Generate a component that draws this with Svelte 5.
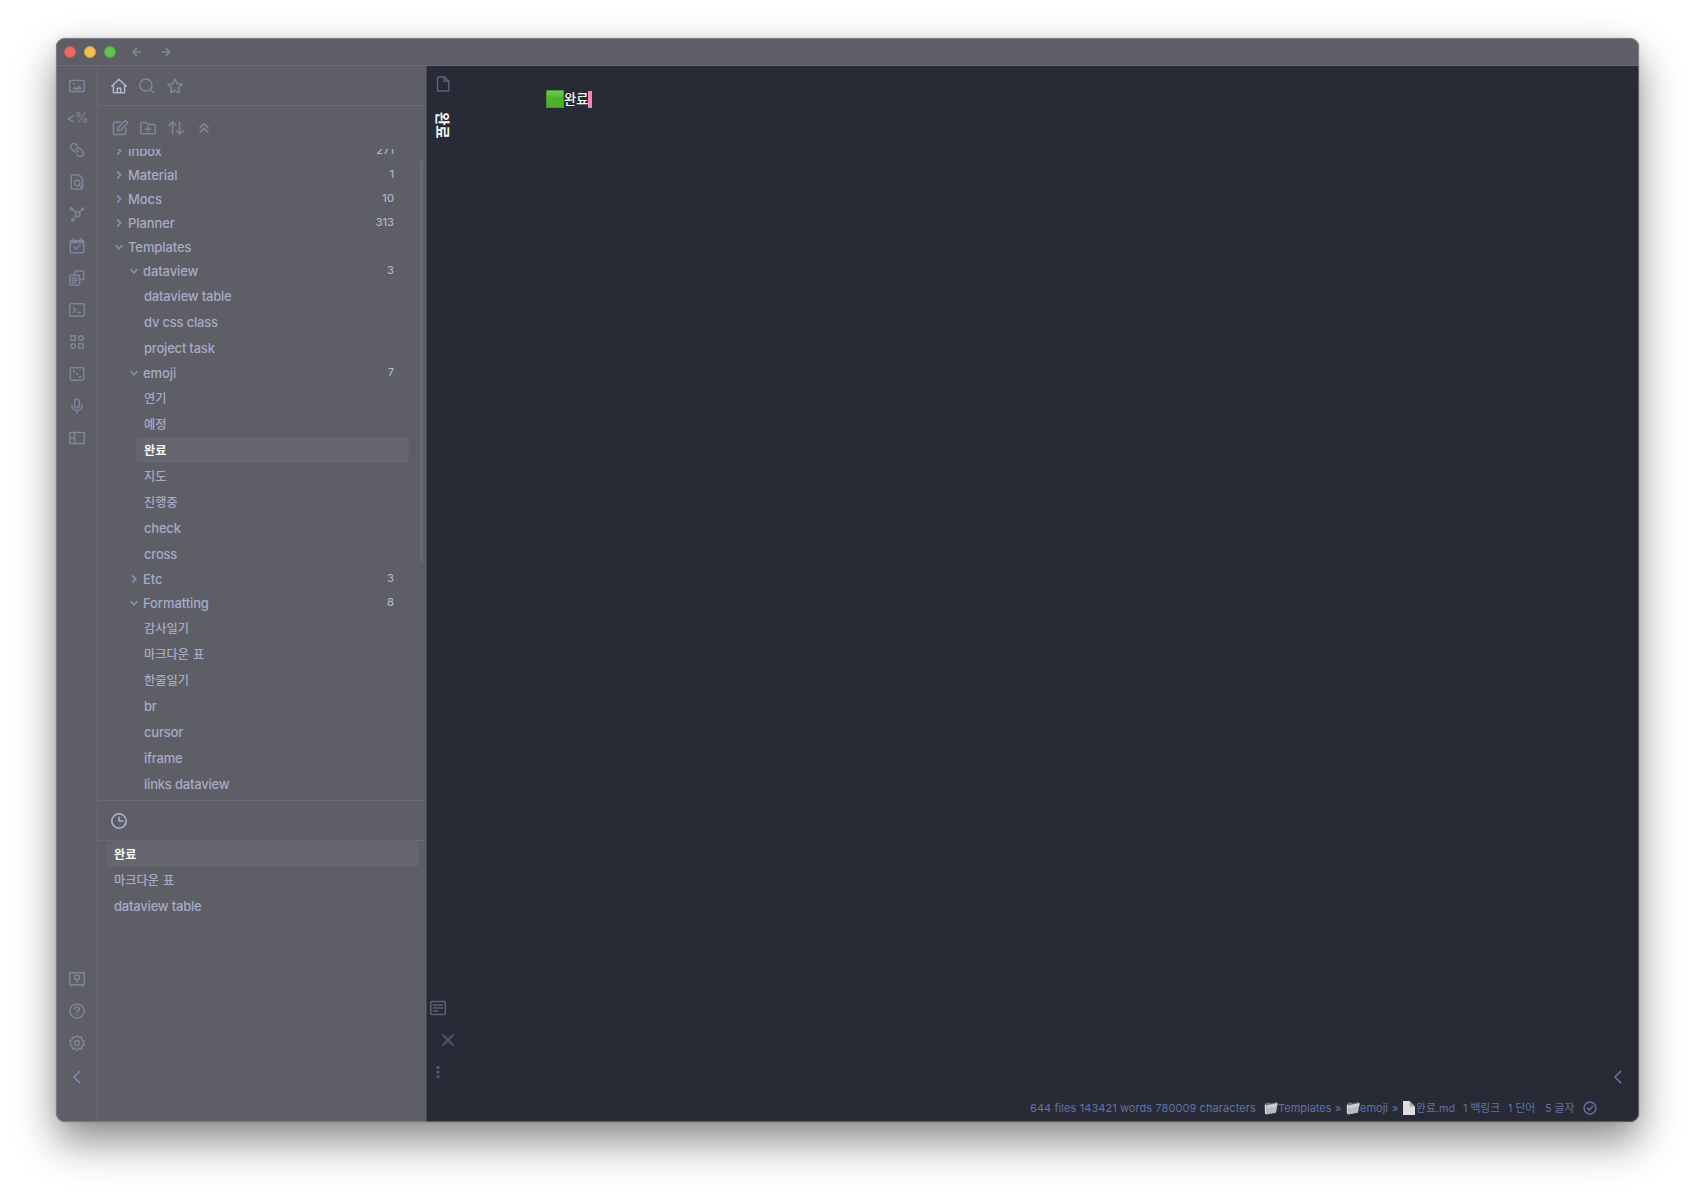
<script lang="ts">
  type Icon = { d: string; fill?: string; box?: string };
  type Row = { name: string; kind: 'folder' | 'file'; depth: number; open?: boolean; count?: number };

  // Stroke paths on an 18px grid, with an optional filled part.
  const icons: Record<string, Icon> = {
    back: { d: 'M13 9H5.2M8.6 5.4 5 9l3.6 3.6' },
    forward: { d: 'M4.8 9h7.8M9.2 5.4 12.8 9l-3.6 3.6' },
    image: {
      d: 'M2.4 3.5h13.2a.7.7 0 0 1 .7.7v9.6a.7.7 0 0 1-.7.7H2.4a.7.7 0 0 1-.7-.7V4.2a.7.7 0 0 1 .7-.7z',
      fill: 'M4.3 12.4 7 9.4l1.8 1.5 2.4-3 3.2 4.5zM5 6h1.8v1.8H5z',
    },
    link: {
      box: '-2 -2 28 28',
      d: 'M14 13a5 5 0 0 1-7.54.54l-3-3a5 5 0 0 1 7.07-7.07l1.72 1.71M10 11a5 5 0 0 1 7.54-.54l3 3a5 5 0 0 1-7.07 7.07l-1.71-1.71',
    },
    fileSearch: {
      d: 'M14.7 14.8V5.6L11 1.9H4.2a.9.9 0 0 0-.9.9v12.4c0 .5.4.9.9.9h9.6M12 10a2.7 2.7 0 1 1-5.4 0 2.7 2.7 0 0 1 5.4 0zM11.3 12l3.2 3.3',
    },
    graph: {
      d: 'M12 9.2a2.3 2.3 0 1 1-4.6 0 2.3 2.3 0 0 1 4.6 0zM4 4.2l4 3.3M14.2 4.2l-2.9 3.2M5.2 14.4l3-3.3',
      fill: 'M5.2 3.7a1.8 1.8 0 1 1-3.6 0 1.8 1.8 0 0 1 3.6 0zM16.6 4a1.8 1.8 0 1 1-3.6 0 1.8 1.8 0 0 1 3.6 0zM6.4 14.9a1.8 1.8 0 1 1-3.6 0 1.8 1.8 0 0 1 3.6 0z',
    },
    calendar: {
      d: 'M3.2 3.5h11.6c.5 0 .9.4.9.9v10.4c0 .5-.4.9-.9.9H3.2a.9.9 0 0 1-.9-.9V4.4c0-.5.4-.9.9-.9zM5.2 1.6v2M12.8 1.6v2M6 9.8l2.2 2.2L12 8',
      fill: 'M2.3 3.5h13.4v2.7H2.3z',
    },
    copy: {
      d: 'M6.8 6V2.7c0-.4.3-.7.7-.7H15c.4 0 .7.3.7.7v7.2c0 .4-.3.7-.7.7h-3.2M2.4 6.3h8.4c.4 0 .7.3.7.7v8.2c0 .4-.3.7-.7.7H2.4a.7.7 0 0 1-.7-.7V7c0-.4.3-.7.7-.7zM4 9h5.2M4 11.2h5.2M4 13.4h3.6',
    },
    terminal: { d: 'M3 2.8h12c.7 0 1.3.5 1.3 1.2v10c0 .7-.6 1.2-1.3 1.2H3c-.7 0-1.3-.5-1.3-1.2V4c0-.7.6-1.2 1.3-1.2zM5.4 6.8 7.6 9l-2.2 2.2M9.5 11.5h2.8' },
    shapes: {
      d: 'M2.8 2.8h4.5v4.5H2.8zM10.7 10.8h4.5v4.5h-4.5zM15.3 5a2.3 2.3 0 1 1-4.6 0 2.3 2.3 0 0 1 4.6 0zM7.4 13a2.3 2.3 0 1 1-4.6 0 2.3 2.3 0 0 1 4.6 0z',
    },
    dice: {
      d: 'M3.5 2.7h11c.7 0 1.2.5 1.2 1.2v10.2c0 .7-.5 1.2-1.2 1.2h-11c-.7 0-1.2-.5-1.2-1.2V3.9c0-.7.5-1.2 1.2-1.2z',
      fill: 'M5 5.3h2v2H5zM8 8h2v2H8zM11.1 11h2v2h-2z',
    },
    mic: { d: 'M9 2a2.4 2.4 0 0 1 2.4 2.4v4.2a2.4 2.4 0 0 1-4.8 0V4.4A2.4 2.4 0 0 1 9 2zM3.9 8.6a5.1 5.1 0 0 0 10.2 0M9 13.7v2.6' },
    layout: { d: 'M2.4 3.4h13.2c.4 0 .7.3.7.7v9.8c0 .4-.3.7-.7.7H2.4a.7.7 0 0 1-.7-.7V4.1c0-.4.3-.7.7-.7zM6.6 3.4v11.2M2 9h4.4' },
    vault: { d: 'M2.2 2.7h13.6c.3 0 .5.2.5.5v11c0 .3-.2.5-.5.5H2.2a.5.5 0 0 1-.5-.5v-11c0-.3.2-.5.5-.5zM3.8 14.9v1.5M14.2 14.9v1.5M11.4 7.4a2.4 2.4 0 1 1-4.8 0 2.4 2.4 0 0 1 4.8 0zM9 9.8v2.8' },
    help: {
      d: 'M16.1 9A7.1 7.1 0 1 1 1.9 9a7.1 7.1 0 0 1 14.2 0zM6.7 7.2A2.3 2.3 0 1 1 9.9 9.2c-.6.3-.9.7-.9 1.4',
      fill: 'M8.2 12h1.6v1.6H8.2z',
    },
    gear: {
      d: 'M9 1.8l1.9 1.7 2.6-.3.4 2.6 2.3 1.2L15.2 9l1 2-2.3 1.2-.4 2.6-2.6-.3L9 16.2l-1.9-1.7-2.6.3-.4-2.6L1.8 11l1-2-1-2 2.3-1.2.4-2.6 2.6.3zM11.4 9a2.4 2.4 0 1 1-4.8 0 2.4 2.4 0 0 1 4.8 0z',
    },
    collapse: { d: 'M11.7 3.4 5.9 9l5.8 5.6' },
    home: { d: 'M1.8 9.3 9 2.3l7.2 7M3.4 8v7.7h11.2V8M7.3 15.5v-4.2h3.4v4.2' },
    search: { d: 'M14 8a6.1 6.1 0 1 1-12.2 0A6.1 6.1 0 0 1 14 8zM12.3 12.4l3.1 3.2' },
    star: { d: 'M9 2l2.1 4.7 5.1.6-3.8 3.5 1 5.1L9 13.4l-4.4 2.5 1-5.1-3.8-3.5 5.1-.6z' },
    edit: { d: 'M9.6 3.2H4c-.9 0-1.6.7-1.6 1.6v9.2c0 .9.7 1.6 1.6 1.6h9.2c.9 0 1.6-.7 1.6-1.6V9M6.5 11.7l.5-2.9 6.5-6.5c.5-.5 1.2-.5 1.7 0l.7.7c.5.5.5 1.2 0 1.7l-6.5 6.5z' },
    folderPlus: { d: 'M3 3.6h4l1.6 1.8H15c.7 0 1.3.5 1.3 1.2v7c0 .7-.6 1.2-1.3 1.2H3c-.7 0-1.3-.5-1.3-1.2V4.8c0-.7.6-1.2 1.3-1.2zM9 7.4v5M6.5 9.9h5' },
    sort: { d: 'M5.6 15.2V3M2.1 6.4 5.6 2.9l3.3 3.4M12.6 3v12M9.3 11.8l3.3 3.3 3.4-3.3' },
    foldAll: { d: 'M5 8.6l4-4 4 4M5 13.4l4-4 4 4' },
    clock: { d: 'M16.2 9A7.2 7.2 0 1 1 1.8 9a7.2 7.2 0 0 1 14.4 0zM9 5.3V9h3.7' },
    file: { d: 'M4.3 1.9h6l4.4 4.3v9.3c0 .3-.3.6-.6.6H4.3a.8.8 0 0 1-.8-.8V2.7c0-.4.4-.8.8-.8zM10.2 2v4.3h4.4' },
    reading: { d: 'M2.5 2.6h13c.4 0 .8.3.8.7v11.4c0 .4-.4.7-.8.7h-13a.8.8 0 0 1-.8-.7V3.3c0-.4.4-.7.8-.7zM4.3 6h9.4M4.3 9h9.4M4.3 12h4.4' },
    close: { d: 'M4 4l10 10M14 4 4 14' },
    more: {
      d: '',
      fill: 'M10.5 4.4a1.5 1.5 0 1 1-3 0 1.5 1.5 0 0 1 3 0zM10.5 9a1.5 1.5 0 1 1-3 0 1.5 1.5 0 0 1 3 0zM10.5 13.5a1.5 1.5 0 1 1-3 0 1.5 1.5 0 0 1 3 0z',
    },
    synced: { d: 'M15 9A6 6 0 1 1 3 9a6 6 0 0 1 12 0zM6.3 9.2l2 1.9 3.5-3.9' },
  };

  const ribbonTop = ['image', 'templater', 'link', 'fileSearch', 'graph', 'calendar', 'copy', 'terminal', 'shapes', 'dice', 'mic', 'layout'];
  const ribbonBottom = ['vault', 'help', 'gear'];

  const folder = (name: string, depth: number, open: boolean, count?: number): Row => ({ name, kind: 'folder', depth, open, count });
  const file = (name: string): Row => ({ name, kind: 'file', depth: 2 });

  const rows: Row[] = [
    folder('Inbox', 0, false, 271),
    folder('Material', 0, false, 1),
    folder('Mocs', 0, false, 10),
    folder('Planner', 0, false, 313),
    folder('Templates', 0, true),
    folder('dataview', 1, true, 3),
    file('dataview table'),
    file('dv css class'),
    file('project task'),
    folder('emoji', 1, true, 7),
    file('연기'),
    file('예정'),
    file('완료'),
    file('지도'),
    file('진행중'),
    file('check'),
    file('cross'),
    folder('Etc', 1, false, 3),
    folder('Formatting', 1, true, 8),
    file('감사일기'),
    file('마크다운 표'),
    file('한줄일기'),
    file('br'),
    file('cursor'),
    file('iframe'),
    file('links dataview'),
  ];

  const recent = ['완료', '마크다운 표', 'dataview table'];

  let active = $state('완료');

  const isKorean = (s: string) => /[가-힣]/.test(s);
</script>

{#snippet icon(name: string)}
  <svg class="icon" viewBox={icons[name].box ?? '0 0 18 18'} aria-hidden="true">
    <path class="line" d={icons[name].d} />
    {#if icons[name].fill}<path class="solid" d={icons[name].fill} />{/if}
  </svg>
{/snippet}

{#snippet folderEmoji()}
  <svg class="folder-emoji" viewBox="0 0 14 14" aria-hidden="true">
    <path d="M1 3.2 2 1.8l3.5-.3.8.9L13 1l.3 1.5L12 12 2.2 13.5 1 12z" fill="#68727a" />
    <path d="M3 4.3 13.6 2.2 12 11.6 2 13.5z" fill="#b6bbc2" />
    <path d="M3 4.3 13.6 2.2 13 5.5 2.7 7.5z" fill="#cbcfd3" />
    <path d="M.8 3.5 2.6 4.3 2 13.3.9 12z" fill="#e0e2e2" />
  </svg>
{/snippet}

<div class="desktop">
  <div class="window">
    <header class="titlebar">
      <span class="light red"></span>
      <span class="light yellow"></span>
      <span class="light green"></span>
      <button class="nav-arrow" aria-label="Back">{@render icon('back')}</button>
      <button class="nav-arrow" aria-label="Forward">{@render icon('forward')}</button>
    </header>

    <div class="workspace">
      <nav class="ribbon">
        {#each ribbonTop as name}
          <button class="ribbon-btn" aria-label={name}>
            {#if name === 'templater'}<span class="templater">&lt;%</span>{:else}{@render icon(name)}{/if}
          </button>
        {/each}
        <span class="spacer"></span>
        {#each ribbonBottom as name}
          <button class="ribbon-btn" aria-label={name}>{@render icon(name)}</button>
        {/each}
        <button class="ribbon-btn toggle" aria-label="Collapse">{@render icon('collapse')}</button>
      </nav>

      <aside class="sidebar">
        <div class="tabs">
          <button class="on" aria-label="Files">{@render icon('home')}</button>
          <button aria-label="Search">{@render icon('search')}</button>
          <button aria-label="Starred">{@render icon('star')}</button>
        </div>

        <div class="actions">
          <button aria-label="New note">{@render icon('edit')}</button>
          <button aria-label="New folder">{@render icon('folderPlus')}</button>
          <button aria-label="Sort">{@render icon('sort')}</button>
          <button aria-label="Collapse all">{@render icon('foldAll')}</button>
        </div>

        <div class="tree">
          <div class="tree-inner">
            {#each rows as row}
              {#if row.kind === 'folder'}
                <div class="folder" class:nested={row.depth === 1}>
                  <svg class="chevron" class:open={row.open} viewBox="0 0 10 10"><path d="M3.2 1.5 6.8 5 3.2 8.5" /></svg>
                  <span class="name">{row.name}</span>
                  {#if row.count}<span class="count">{row.count}</span>{/if}
                </div>
              {:else}
                <button class="file" class:active={row.name === active} class:ko={isKorean(row.name)} onclick={() => (active = row.name)}>
                  {row.name}
                </button>
              {/if}
            {/each}
          </div>
          <div class="scrollbar"></div>
        </div>

        <div class="tabs recent-tabs">
          <button class="on" aria-label="Recent files">{@render icon('clock')}</button>
        </div>
        <div class="recent">
          {#each recent as name}
            <button class="file" class:active={name === active} class:ko={isKorean(name)} onclick={() => (active = name)}>{name}</button>
          {/each}
        </div>
      </aside>

      <main class="pane">
        <div class="pane-head">
          <span class="file-icon">{@render icon('file')}</span>
          <span class="pane-title">{active}</span>
          <span class="spacer"></span>
          <button aria-label="Reading view">{@render icon('reading')}</button>
          <button class="close" aria-label="Close">{@render icon('close')}</button>
          <button aria-label="More">{@render icon('more')}</button>
        </div>

        <div class="editor">
          <div class="line-text">
            <span class="green-square"></span>
            <span class="typed">완료</span>
            <span class="caret"></span>
          </div>
          <span class="spacer"></span>
          <button class="right-toggle" aria-label="Expand">{@render icon('collapse')}</button>
          <footer class="status">
            <span class="stats">644 files 143421 words 780009 characters</span>
            <span class="crumbs">
              {@render folderEmoji()}<span class="c1">Templates</span><span class="sep">»</span>
              {@render folderEmoji()}<span class="c2">emoji</span><span class="sep">»</span>
              <svg class="page-emoji" viewBox="0 0 12 14" aria-hidden="true">
                <path d="M0 0h6.5L12 5.5V14H0z" fill="#dedede" />
                <path d="M6.5 0 12 5.5H6.5z" fill="#a9a9a9" />
              </svg><span class="c3 ko-text">완료.md</span>
            </span>
            <span class="backlinks ko-text">1 백링크</span>
            <span class="words ko-text">1 단어</span>
            <span class="chars ko-text">5 글자</span>
            <span class="sync">{@render icon('synced')}</span>
          </footer>
        </div>
      </main>
    </div>
  </div>
</div>

<style>
  :global(body) {
    background: #fff;
    overflow: hidden;
  }

  .desktop {
    box-sizing: border-box;
    width: 1695px;
    height: 1196px;
    padding: 38px 56px 74px;
    font-family: Inter, 'Noto Sans CJK KR', sans-serif;
    font-size: 13px;
    color: #a6abc5;
  }

  .window {
    position: relative;
    display: flex;
    flex-direction: column;
    height: 1084px;
    border-radius: 9px;
    overflow: hidden;
    background: #5e5e67;
    box-shadow: 0 20px 42px rgba(0, 0, 0, 0.45), 0 0 14px rgba(0, 0, 0, 0.06), 0 0 1px rgba(0, 0, 0, 0.5);
  }

  /* hairline rim lying over the window content */
  .window::after {
    content: '';
    position: absolute;
    inset: 0;
    border-radius: 9px;
    border: 1px solid rgba(165, 165, 170, 0.42);
    pointer-events: none;
  }

  button {
    display: flex;
    align-items: center;
    justify-content: center;
    padding: 0;
    border: 0;
    background: none;
    color: inherit;
    font: inherit;
    letter-spacing: inherit;
  }

  .icon {
    display: block;
    width: 18px;
    height: 18px;
    flex-shrink: 0;
  }

  .line {
    fill: none;
    stroke: currentColor;
    stroke-width: 1.5;
    stroke-linecap: round;
    stroke-linejoin: round;
    vector-effect: non-scaling-stroke;
  }

  .solid {
    fill: currentColor;
  }

  .spacer {
    flex: 1;
  }

  .titlebar {
    box-sizing: border-box;
    display: flex;
    align-items: center;
    height: 28px;
    padding-left: 8px;
    border-bottom: 1px solid #6a6a75;
  }

  .light {
    box-sizing: border-box;
    width: 12px;
    height: 12px;
    margin-right: 8px;
    border-radius: 50%;
  }

  .red { background: #ec6a5e; border: 1px solid #d35549; }
  .yellow { background: #f4bf4f; border: 1px solid #d6a243; }
  .green { background: #61c554; border: 1px solid #51a73e; }

  .nav-arrow {
    width: 18px;
    margin: 1px 10.5px 0 4px;
    color: #85899d;
  }

  .nav-arrow + .nav-arrow {
    margin-left: 0;
  }

  .workspace {
    display: flex;
    flex: 1;
    min-height: 0;
  }

  .ribbon {
    box-sizing: border-box;
    display: flex;
    flex-direction: column;
    width: 42px;
    padding: 4px 0 27px;
    border-right: 1px solid #6a6a75;
    color: #80849a;
  }

  .ribbon-btn {
    width: 42px;
    height: 32px;
  }

  .templater {
    margin-bottom: 2px;
    font-size: 14px;
    font-weight: 500;
    letter-spacing: -0.6px;
  }

  .toggle {
    height: 36px;
    color: #7f8cbc;
  }

  .sidebar {
    box-sizing: border-box;
    display: flex;
    flex-direction: column;
    width: 329px;
    border-right: 1px solid #464751;
    letter-spacing: -0.1px;
  }

  .tabs {
    box-sizing: border-box;
    display: flex;
    gap: 10px;
    height: 40px;
    padding-left: 12px;
    border-bottom: 1px solid #6a6a75;
    color: #81859b;
  }

  .tabs .on {
    color: #b0b5d2;
  }

  .actions {
    display: flex;
    align-items: center;
    gap: 10px;
    height: 42px;
    padding: 1px 0 0 13px;
    color: #81859b;
  }

  .tree {
    position: relative;
    height: 651px;
    overflow: hidden;
  }

  .tree-inner {
    margin-top: -10px;
  }

  .folder {
    box-sizing: border-box;
    display: flex;
    align-items: center;
    height: 24px;
    padding: 0 32px 1px 16px;
    font-weight: 500;
  }

  .folder.nested {
    padding-left: 31px;
  }

  .chevron {
    width: 10px;
    height: 10px;
    margin: 1px 4px 0 0;
    fill: none;
    stroke: #7f8cba;
    stroke-width: 1.8;
  }

  .chevron.open {
    transform: rotate(90deg);
  }

  .count {
    margin: -1px 0 0 auto;
    font-size: 11px;
    letter-spacing: 0;
    color: #b0b4c8;
  }

  .file {
    box-sizing: border-box;
    justify-content: flex-start;
    width: 273px;
    height: 26px;
    margin-left: 38px;
    padding-left: 8px;
    border-radius: 4px;
    font-weight: 500;
    letter-spacing: -0.2px;
  }

  .file.ko {
    padding-bottom: 1px;
    font-size: 12.2px;
    letter-spacing: 0;
    word-spacing: 1px;
  }

  .file.active {
    background: #65656f;
    color: #f8f8f2;
    font-weight: 700;
  }

  /* overlay thumb */
  .scrollbar {
    position: absolute;
    top: 11px;
    right: 3px;
    width: 3px;
    height: 402px;
    border-radius: 2px;
    background: #6a6a76;
  }

  .recent-tabs {
    height: 41px;
    border-top: 1px solid #6a6a75;
  }

  .recent .file {
    width: 313px;
    margin-left: 8px;
  }

  .pane {
    display: flex;
    flex: 1;
    min-width: 0;
    background: #282a36;
  }

  .pane-head {
    display: flex;
    flex-direction: column;
    width: 40px;
    padding: 9px 0 34px 2px;
    color: #5d6078;
  }

  .pane-head button {
    width: 18px;
    height: 32px;
  }

  .pane-head .close {
    margin-left: 10px;
  }

  .file-icon {
    margin-left: 5px;
  }

  .pane-title {
    margin: 19px 0 0 3px;
    width: 20px;
    font-size: 14.5px;
    line-height: 20px;
    font-weight: 700;
    color: #f8f8f2;
    writing-mode: vertical-rl;
    text-orientation: sideways;
  }

  .editor {
    display: flex;
    flex: 1;
    flex-direction: column;
  }

  .line-text {
    display: flex;
    align-items: center;
    height: 18px;
    margin: 24px 0 0 77px;
    color: #f8f8f2;
  }

  .green-square {
    box-sizing: border-box;
    width: 18px;
    height: 18px;
    border: 1px solid #3f9a26;
    background: linear-gradient(#76c95b, #4fb02e 45%, #50ae2f);
  }

  .typed {
    width: 24px;
    padding-bottom: 1px;
    font-size: 13.2px;
    font-weight: 500;
    white-space: nowrap;
  }

  .caret {
    width: 4px;
    height: 17px;
    background: #f286c4;
  }

  .right-toggle {
    align-self: flex-end;
    width: 18px;
    margin: 0 12px 12px 0;
    color: #6272a4;
  }

  .status {
    display: flex;
    align-items: center;
    justify-content: flex-end;
    height: 20px;
    margin-bottom: 4px;
    padding-right: 40px;
    font-size: 11px;
    color: #6272a4;
    white-space: nowrap;
  }

  .status > span,
  .crumbs {
    display: flex;
    align-items: center;
  }

  .status .ko-text {
    padding-bottom: 2px;
    font-size: 10.8px;
  }

  .stats { width: 234px; letter-spacing: 0.08px; }
  .folder-emoji { width: 14px; height: 14px; }
  .page-emoji { width: 12px; height: 14px; margin-right: 1px; }
  .c1 { width: 53px; }
  .c2 { width: 28px; }
  .sep { width: 6px; margin: 0 5px 0 4px; }
  .c3 { width: 39px; }
  .backlinks { width: 37px; margin-left: 8px; }
  .words { width: 29px; margin-left: 8px; }
  .chars { width: 29px; margin-left: 8px; }
  .sync { margin-left: 7px; }
</style>
